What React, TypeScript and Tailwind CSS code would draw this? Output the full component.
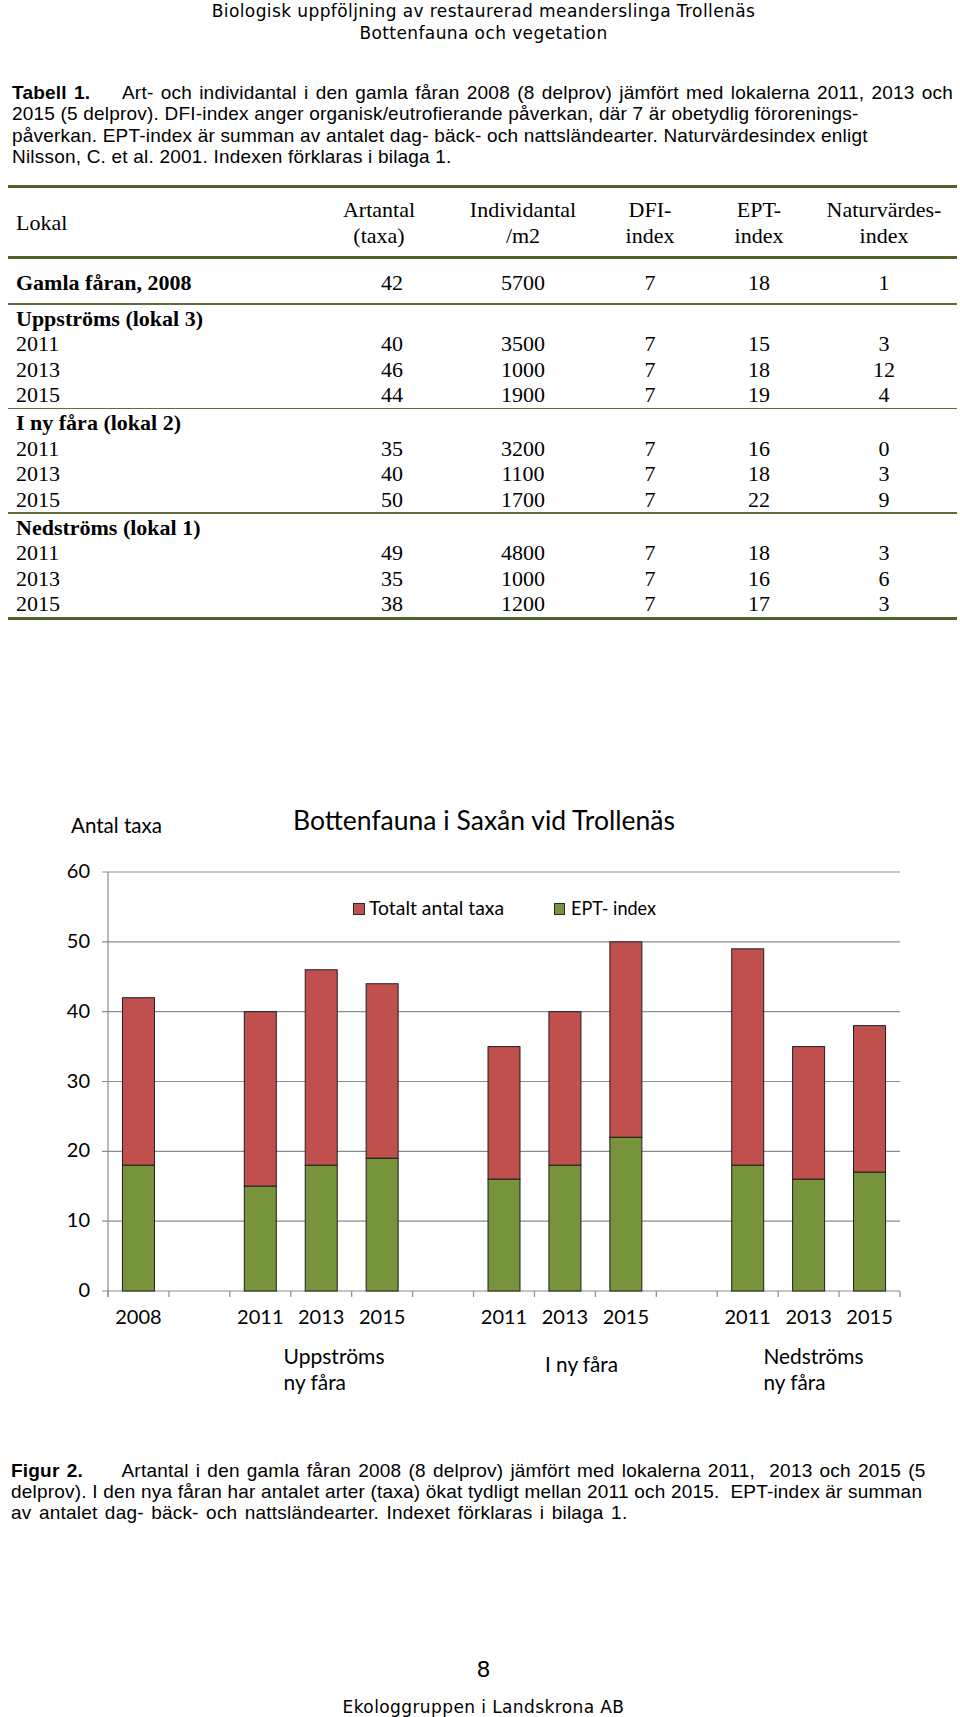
import React from "react";

type Row = [string, string, string, string, string, string];

const groups: { title: string; rows: Row[] }[] = [
  {
    title: "Uppströms (lokal 3)",
    rows: [
      ["2011", "40", "3500", "7", "15", "3"],
      ["2013", "46", "1000", "7", "18", "12"],
      ["2015", "44", "1900", "7", "19", "4"],
    ],
  },
  {
    title: "I ny fåra (lokal 2)",
    rows: [
      ["2011", "35", "3200", "7", "16", "0"],
      ["2013", "40", "1100", "7", "18", "3"],
      ["2015", "50", "1700", "7", "22", "9"],
    ],
  },
  {
    title: "Nedströms (lokal 1)",
    rows: [
      ["2011", "49", "4800", "7", "18", "3"],
      ["2013", "35", "1000", "7", "16", "6"],
      ["2015", "38", "1200", "7", "17", "3"],
    ],
  },
];

const GRID = "grid grid-cols-[312px_144px_118px_136px_82px_157px]";

function Cells({ r, bold }: { r: Row; bold?: boolean }) {
  return (
    <>
      <div className={"pl-[8px] whitespace-nowrap " + (bold ? "font-bold" : "")}>{r[0]}</div>
      <div className="text-center">{r[1]}</div>
      <div className="text-center">{r[2]}</div>
      <div className="text-center">{r[3]}</div>
      <div className="text-center">{r[4]}</div>
      <div className="text-center pl-[11px]">{r[5]}</div>
    </>
  );
}

function DataTable() {
  return (
    <div className="mt-[18px] ml-[8px] w-[949px] font-['Liberation_Serif','Times_New_Roman',serif] text-[22px] text-black">
      <div className="h-[3px] bg-[#4f6228]" />
      <div className={GRID + " items-center pt-[8.5px] pb-[7.5px] leading-[26px]"}>
        <div className="pl-[8px]">Lokal</div>
        <div className="text-center pr-[26px]">
          Artantal
          <br />
          (taxa)
        </div>
        <div className="text-center">
          Individantal
          <br />
          /m2
        </div>
        <div className="text-center">
          DFI-
          <br />
          index
        </div>
        <div className="text-center">
          EPT-
          <br />
          index
        </div>
        <div className="text-center pl-[11px]">
          Naturvärdes-
          <br />
          index
        </div>
      </div>
      <div className="h-[3px] bg-[#4f6228]" />
      <div className={GRID + " h-[44px] pt-[11px] leading-[25px]"}>
        <Cells r={["Gamla fåran, 2008", "42", "5700", "7", "18", "1"]} bold />
      </div>
      <div className="h-[1.5px] bg-[#5e6f3c]" />
      {groups.map((g, gi) => (
        <div key={g.title}>
          <div className="pt-[1px]">
            <div className="h-[25.5px] leading-[25.5px] pl-[8px] font-bold whitespace-nowrap">{g.title}</div>
            {g.rows.map((r) => (
              <div key={r[0]} className={GRID + " h-[25.5px] leading-[25.5px]"}>
                <Cells r={r} />
              </div>
            ))}
          </div>
          {gi < 2 ? <div className="h-[1.5px] bg-[#5e6f3c]" /> : null}
        </div>
      ))}
      <div className="h-[3px] bg-[#4f6228]" />
    </div>
  );
}

const CAT_W = 792 / 13;
const X0 = 108;
const Y0 = 491;
const PER = 6.983;
const yv = (v: number) => Y0 - v * PER;

const cats: ({ label: string; total: number; ept: number } | null)[] = [
  { label: "2008", total: 42, ept: 18 },
  null,
  { label: "2011", total: 40, ept: 15 },
  { label: "2013", total: 46, ept: 18 },
  { label: "2015", total: 44, ept: 19 },
  null,
  { label: "2011", total: 35, ept: 16 },
  { label: "2013", total: 40, ept: 18 },
  { label: "2015", total: 50, ept: 22 },
  null,
  { label: "2011", total: 49, ept: 18 },
  { label: "2013", total: 35, ept: 16 },
  { label: "2015", total: 38, ept: 17 },
];

function Chart() {
  const ticks = [0, 10, 20, 30, 40, 50, 60];
  return (
    <svg
      width={960}
      height={610}
      viewBox="0 0 960 610"
      className="mt-[180.5px] block font-['Lato','Open_Sans',sans-serif]"
    >
      <text x={71} y={33} fontSize={22} textLength={91} lengthAdjust="spacingAndGlyphs" fill="#000">
        Antal taxa
      </text>
      <text x={293} y={30} fontSize={27} textLength={382} lengthAdjust="spacingAndGlyphs" fill="#000">
        Bottenfauna i Saxån vid Trollenäs
      </text>

      {ticks.map((t) => (
        <g key={t}>
          <line x1={102} x2={900} y1={yv(t)} y2={yv(t)} stroke="#8c8c8c" strokeWidth={1.2} />
          <text x={90} y={yv(t) + 6} fontSize={20} textAnchor="end" fill="#000">
            {t}
          </text>
        </g>
      ))}
      <line x1={108} x2={108} y1={yv(60)} y2={Y0 + 6} stroke="#8c8c8c" strokeWidth={1.2} />
      {Array.from({ length: 14 }).map((_, i) => (
        <line
          key={i}
          x1={X0 + i * CAT_W}
          x2={X0 + i * CAT_W}
          y1={Y0}
          y2={Y0 + 6}
          stroke="#8c8c8c"
          strokeWidth={1.2}
        />
      ))}

      {/* legend */}
      <rect x={353.5} y={103.5} width={11} height={11} fill="#c0504d" stroke="#2a2a2a" strokeWidth={1} />
      <text x={369} y={114.5} fontSize={20} textLength={135} lengthAdjust="spacingAndGlyphs" fill="#000">
        Totalt antal taxa
      </text>
      <rect x={554.5} y={103.5} width={10} height={11} fill="#77933c" stroke="#2a2a2a" strokeWidth={1} />
      <text x={571} y={114.5} fontSize={20} textLength={85} lengthAdjust="spacingAndGlyphs" fill="#000">
        EPT- index
      </text>

      {cats.map((c, i) => {
        if (!c) return null;
        const cx = X0 + (i + 0.5) * CAT_W;
        const bx = cx - 16;
        return (
          <g key={i}>
            <rect
              x={bx}
              y={yv(c.total)}
              width={32}
              height={yv(c.ept) - yv(c.total)}
              fill="#c0504d"
              stroke="#1e1e1e"
              strokeWidth={1}
            />
            <rect
              x={bx}
              y={yv(c.ept)}
              width={32}
              height={Y0 - yv(c.ept)}
              fill="#77933c"
              stroke="#1e1e1e"
              strokeWidth={1}
            />
            <text x={cx} y={524} fontSize={20} textAnchor="middle" fill="#000">
              {c.label}
            </text>
          </g>
        );
      })}

      <text x={283.5} y={563.5} fontSize={22} textLength={101} lengthAdjust="spacingAndGlyphs" fill="#000">
        Uppströms
      </text>
      <text x={283.5} y={589.5} fontSize={22} textLength={62.5} lengthAdjust="spacingAndGlyphs" fill="#000">
        ny fåra
      </text>
      <text x={545} y={571.5} fontSize={22} textLength={73} lengthAdjust="spacingAndGlyphs" fill="#000">
        I ny fåra
      </text>
      <text x={763.5} y={563.5} fontSize={22} textLength={100} lengthAdjust="spacingAndGlyphs" fill="#000">
        Nedströms
      </text>
      <text x={763.5} y={589.5} fontSize={22} textLength={62} lengthAdjust="spacingAndGlyphs" fill="#000">
        ny fåra
      </text>
    </svg>
  );
}

export default function App() {
  return (
    <div className="relative w-[960px] h-[1717px] overflow-hidden bg-white text-black">
      <div className="pl-[7px] text-center font-['DejaVu_Sans',sans-serif] text-[17px] leading-[22px] tracking-[0.4px]">
        <div>Biologisk uppföljning av restaurerad meanderslinga Trollenäs</div>
        <div>Bottenfauna och vegetation</div>
      </div>

      <div className="mt-[38px] pl-[12px] font-['Liberation_Sans',Arial,sans-serif] text-[19px] leading-[21.3px] tracking-[0.2px]">
        <div className="whitespace-pre [word-spacing:1.8px]">
          <span className="inline-block w-[110px] font-bold">Tabell 1.</span>
          Art- och individantal i den gamla fåran 2008 (8 delprov) jämfört med lokalerna 2011, 2013 och
        </div>
        <div className="whitespace-pre">
          2015 (5 delprov). DFI-index anger organisk/eutrofierande påverkan, där 7 är obetydlig förorenings-
        </div>
        <div className="whitespace-pre">
          påverkan. EPT-index är summan av antalet dag- bäck- och nattsländearter. Naturvärdesindex enligt
        </div>
        <div className="whitespace-pre">Nilsson, C. et al. 2001. Indexen förklaras i bilaga 1.</div>
      </div>

      <DataTable />

      <Chart />

      <div className="mt-[49.5px] pl-[11px] font-['Liberation_Sans',Arial,sans-serif] text-[19px] leading-[21px] tracking-[0.2px]">
        <div className="whitespace-pre [word-spacing:1.7px]">
          <span className="inline-block w-[110.5px] font-bold">Figur 2.</span>
          Artantal i den gamla fåran 2008 (8 delprov) jämfört med lokalerna 2011,  2013 och 2015 (5
        </div>
        <div className="whitespace-pre">
          delprov). I den nya fåran har antalet arter (taxa) ökat tydligt mellan 2011 och 2015.  EPT-index är summan
        </div>
        <div className="whitespace-pre [word-spacing:2px]">
          av antalet dag- bäck- och nattsländearter. Indexet förklaras i bilaga 1.
        </div>
      </div>

      <div className="mt-[134px] pl-[7px] text-center font-['DejaVu_Sans',sans-serif] text-[22px] leading-[26px]">
        8
      </div>
      <div className="mt-[14.5px] pl-[7px] text-center font-['DejaVu_Sans',sans-serif] text-[17px] leading-[20px] tracking-[0.4px]">
        Ekologgruppen i Landskrona AB
      </div>
    </div>
  );
}
